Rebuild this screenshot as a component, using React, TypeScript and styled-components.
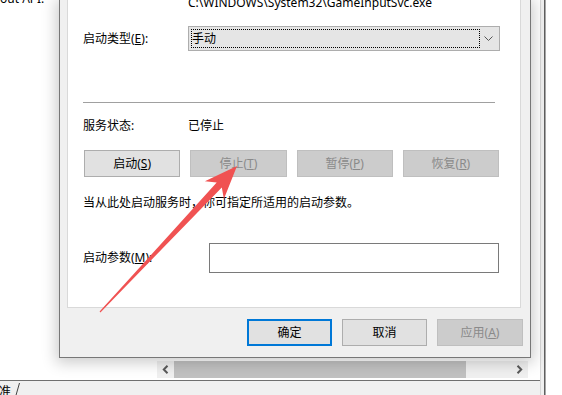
import React from "react";
import styled, { createGlobalStyle } from "styled-components";

const GlobalStyle = createGlobalStyle`
  html, body { margin: 0; padding: 0; background: #fff; }
  * { box-sizing: border-box; }
`;

const Screen = styled.div`
  position: relative;
  width: 562px;
  height: 395px;
  overflow: hidden;
  background: #fff;
  font-family: "Noto Sans", "Noto Sans CJK SC", sans-serif;
  font-size: 12px;
  color: #000;
`;

/* ---------- background window ---------- */
const BgWindow = styled.div`
  display: grid;
  grid-template-columns: 540px 4px 1px 1px 1fr;
  height: 100%;
`;

const BgMain = styled.div`
  display: flex;
  flex-direction: column;
  height: 100%;
`;

const BgContent = styled.div`
  flex: 1;
  display: flex;
  flex-direction: column;
  justify-content: space-between;
  background: #fff;
  padding-bottom: 2px;
`;

const BgTopText = styled.div`
  margin-top: -9px;
  line-height: 16px;
  white-space: nowrap;
`;

const HScroll = styled.div`
  display: flex;
  margin-left: 157px;
  width: 371px;
  height: 17px;
  background: #f0f0f0;
`;

const ScrollArrow = styled.div`
  width: 17px;
  display: flex;
  align-items: center;
  justify-content: center;
`;

const ScrollThumb = styled.div`
  width: 292px;
  background: #c1c1c1;
`;

const ScrollTrack = styled.div`
  flex: 1;
`;

const BgRule = styled.div`
  height: 1px;
  background: #6f6f6f;
`;

const StatusBar = styled.div`
  height: 14px;
  background: #f0f0f0;
  display: flex;
  align-items: flex-start;
  gap: 3px;
  line-height: 16px;
  padding-top: 2px;
`;

const SheetTab = styled.span`
  margin-left: -1px;
  font-family: "Noto Sans CJK SC", sans-serif;
`;

const BgStrip = styled.div`
  background: #f0f0f0;
  border-left: 1px solid #d6d6d6;
`;

const BgDarkLine = styled.div<{ $shade: string }>`
  background: ${(p) => p.$shade};
`;

const BgOutside = styled.div`
  background: #fff;
`;

/* ---------- dialog ---------- */
const Dialog = styled.div`
  position: absolute;
  left: 59px;
  top: 0;
  width: 472px;
  height: 358px;
  background: #f0f0f0;
  border: 1px solid #777;
  border-top: none;
  box-shadow: 0 2px 14px 3px rgba(0, 0, 0, 0.2);
  padding: 0 9px 0 7px;
  display: flex;
  flex-direction: column;
`;

const TabPage = styled.div`
  height: 308px;
  background: #fff;
  border: 1px solid #d9d9d9;
  border-top: none;
  padding: 0 20px 0 15px;
  display: flex;
  flex-direction: column;
`;

const FieldRow = styled.div<{ $top: number; $height?: number }>`
  display: grid;
  grid-template-columns: 105px auto;
  align-items: center;
  justify-content: start;
  margin-top: ${(p) => p.$top}px;
  height: ${(p) => (p.$height ? `${p.$height}px` : "16px")};
  line-height: 16px;
  white-space: nowrap;
`;

const Select = styled.div`
  width: 312px;
  height: 25px;
  border: 1px solid #adadad;
  background: #e5e5e5;
  padding: 2px;
  display: flex;
  align-items: stretch;
`;

const FocusRect = styled.div`
  flex: 1;
  border: 1px dotted #000;
  display: flex;
  align-items: center;
  padding-left: 0;
  line-height: 16px;
`;

const Chevron = styled.div`
  width: 17px;
  display: flex;
  align-items: center;
  justify-content: center;
`;

const Separator = styled.div`
  margin-top: 51px;
  height: 1px;
  width: 412px;
  background: #a0a0a0;
`;

const ButtonRow = styled.div`
  display: grid;
  grid-template-columns: repeat(4, 1fr);
  column-gap: 10px;
  width: 415px;
  margin-left: 1px;
  margin-top: 16px;
`;

type Variant = "normal" | "disabled" | "default";

const Btn = styled.div<{ $variant?: Variant; $w?: number }>`
  height: 27px;
  ${(p) => (p.$w ? `width: ${p.$w}px;` : "")}
  display: flex;
  align-items: center;
  justify-content: center;
  line-height: 16px;
  font-size: 12px;
  white-space: nowrap;
  background: ${(p) => (p.$variant === "disabled" ? "#cccccc" : "#e1e1e1")};
  border: ${(p) =>
    p.$variant === "default"
      ? "2px solid #0078d7"
      : p.$variant === "disabled"
      ? "1px solid #bfbfbf"
      : "1px solid #adadad"};
  color: ${(p) => (p.$variant === "disabled" ? "#8a8a8a" : "#000")};
`;

const HelpText = styled.div`
  margin-top: 18px;
  line-height: 16px;
  white-space: nowrap;
`;

const ParamRow = styled.div`
  display: flex;
  align-items: center;
  margin-top: 32px;
`;

const ParamLabel = styled.div`
  width: 126px;
  line-height: 16px;
  white-space: nowrap;
`;

const TextInput = styled.div`
  width: 290px;
  height: 30px;
  border: 1px solid #7a7a7a;
  background: #fff;
`;

const DialogButtons = styled.div`
  display: flex;
  justify-content: flex-end;
  gap: 10px;
  margin-top: 11px;
  margin-right: -2px;
`;

const ArrowLayer = styled.svg`
  position: absolute;
  left: 0;
  top: 0;
  pointer-events: none;
`;

const Mn = styled.span`
  text-decoration: underline;
  text-underline-offset: 1px;
`;

function ChevronLeft() {
  return (
    <svg width="7" height="9" viewBox="0 0 7 9">
      <path d="M5.5 0.8 L1.8 4.5 L5.5 8.2" fill="none" stroke="#5a5a5a" strokeWidth="2" />
    </svg>
  );
}

function ChevronRight() {
  return (
    <svg width="7" height="9" viewBox="0 0 7 9">
      <path d="M1.5 0.8 L5.2 4.5 L1.5 8.2" fill="none" stroke="#5a5a5a" strokeWidth="2" />
    </svg>
  );
}

export default function App() {
  // red annotation arrow geometry
  const tail = { x: 100, y: 312 };
  const tip = { x: 237, y: 166 };
  const dx = tip.x - tail.x;
  const dy = tip.y - tail.y;
  const len = Math.hypot(dx, dy);
  const u = { x: dx / len, y: dy / len };
  const n = { x: -u.y, y: u.x };
  const headLen = 33;
  const headHalf = 13;
  const neckBack = 26;
  const neckHalf = 3.5;
  const tailHalf = 0.6;
  const base = { x: tip.x - u.x * headLen, y: tip.y - u.y * headLen };
  const neck = { x: tip.x - u.x * neckBack, y: tip.y - u.y * neckBack };
  const pts = [
    [tail.x + n.x * tailHalf, tail.y + n.y * tailHalf],
    [neck.x + n.x * neckHalf, neck.y + n.y * neckHalf],
    [base.x + n.x * headHalf, base.y + n.y * headHalf],
    [tip.x, tip.y],
    [base.x - n.x * headHalf, base.y - n.y * headHalf],
    [neck.x - n.x * neckHalf, neck.y - n.y * neckHalf],
    [tail.x - n.x * tailHalf, tail.y - n.y * tailHalf],
  ]
    .map((p) => `${p[0].toFixed(1)},${p[1].toFixed(1)}`)
    .join(" ");

  return (
    <Screen>
      <GlobalStyle />
      <BgWindow>
        <BgMain>
          <BgContent>
            <BgTopText>out API.</BgTopText>
            <HScroll>
              <ScrollArrow>
                <ChevronLeft />
              </ScrollArrow>
              <ScrollThumb />
              <ScrollTrack />
              <ScrollArrow>
                <ChevronRight />
              </ScrollArrow>
            </HScroll>
          </BgContent>
          <BgRule />
          <StatusBar>
            <SheetTab>准</SheetTab>
            <svg width="6" height="14" viewBox="0 0 6 14">
              <line x1="5.5" y1="0" x2="1.5" y2="14" stroke="#444" strokeWidth="1" />
            </svg>
          </StatusBar>
        </BgMain>
        <BgStrip />
        <BgDarkLine $shade="#5f5f5f" />
        <BgDarkLine $shade="#a8a8a8" />
        <BgOutside />
      </BgWindow>

      <Dialog>
        <TabPage>
          <FieldRow $top={-5}>
            <span />
            <span>C:\WINDOWS\System32\GameInputSvc.exe</span>
          </FieldRow>
          <FieldRow $top={15} $height={25}>
            <span>
              启动类型(<Mn>E</Mn>):
            </span>
            <Select>
              <FocusRect>手动</FocusRect>
              <Chevron>
                <svg width="9" height="5" viewBox="0 0 9 5">
                  <path d="M0.5 0.5 L4.5 4.5 L8.5 0.5" fill="none" stroke="#555" strokeWidth="1" />
                </svg>
              </Chevron>
            </Select>
          </FieldRow>
          <Separator />
          <FieldRow $top={15}>
            <span>服务状态:</span>
            <span>已停止</span>
          </FieldRow>
          <ButtonRow>
            <Btn $variant="normal">
              启动(<Mn>S</Mn>)
            </Btn>
            <Btn $variant="disabled">
              停止(<Mn>T</Mn>)
            </Btn>
            <Btn $variant="disabled">
              暂停(<Mn>P</Mn>)
            </Btn>
            <Btn $variant="disabled">
              恢复(<Mn>R</Mn>)
            </Btn>
          </ButtonRow>
          <HelpText>当从此处启动服务时，你可指定所适用的启动参数。</HelpText>
          <ParamRow>
            <ParamLabel>
              启动参数(<Mn>M</Mn>):
            </ParamLabel>
            <TextInput />
          </ParamRow>
        </TabPage>
        <DialogButtons>
          <Btn $variant="default" $w={85}>
            确定
          </Btn>
          <Btn $variant="normal" $w={85}>
            取消
          </Btn>
          <Btn $variant="disabled" $w={86}>
            应用(<Mn>A</Mn>)
          </Btn>
        </DialogButtons>
      </Dialog>

      <ArrowLayer width="562" height="395" viewBox="0 0 562 395">
        <polygon points={pts} fill="#f05252" />
      </ArrowLayer>
    </Screen>
  );
}
